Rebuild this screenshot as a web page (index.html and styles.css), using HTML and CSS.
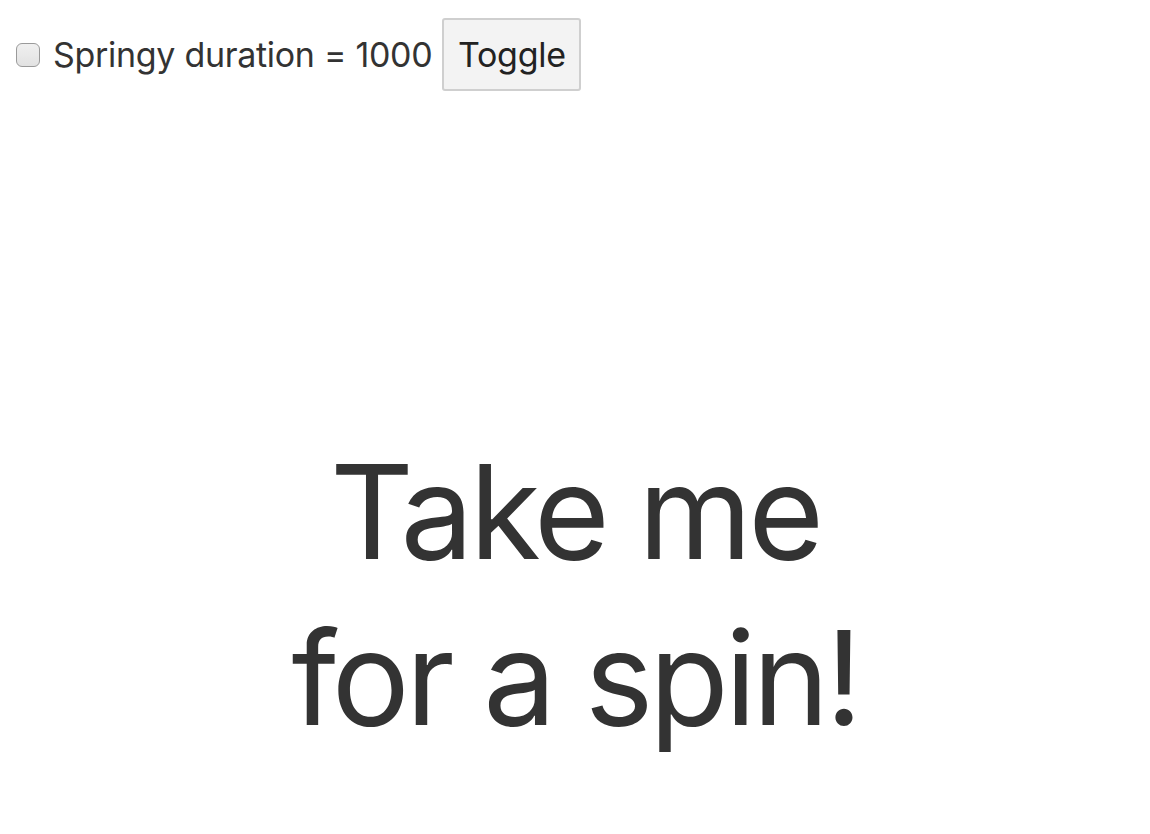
FILE: index.html
```html
<!DOCTYPE html>
<html>
<head>
<meta charset="utf-8">
<link rel="stylesheet" href="styles.css">
</head>
<body>
<div class="page">
  <div class="controls">
    <label class="springy"><input type="checkbox" class="check"><span class="label-text">Springy duration = 1000</span></label>
    <button class="toggle">Toggle</button>
  </div>
  <div class="stage">
    <div class="spin">Take me<br>for a spin!</div>
  </div>
</div>
</body>
</html>
```
FILE: styles.css
```css
html, body {
  margin: 0;
  padding: 0;
  background: #fff;
}
body {
  font-family: Inter, "Noto Sans", "Liberation Sans", sans-serif;
  color: #333;
}
.page {
  height: 834px;
  display: flex;
  flex-direction: column;
}
.controls {
  display: flex;
  align-items: center;
  padding: 18px 16px 0 16px;
  height: 73px;
}
.springy {
  display: flex;
  align-items: center;
  font-size: 34px;
  letter-spacing: -0.3px;
}
.check {
  width: 24px;
  height: 24px;
  margin: 0 13px 0 0;
  appearance: none;
  border: 1.5px solid #9a9a9a;
  border-radius: 6px;
  background: linear-gradient(#f0f0f0, #e2e2e2);
  box-sizing: border-box;
}
.toggle {
  margin-left: 10px;
  height: 73px;
  width: 139px;
  font-family: inherit;
  font-size: 34px;
  letter-spacing: -0.3px;
  color: #222;
  background: #f3f3f3;
  border: 2px solid #cfcfcf;
  border-radius: 3px;
  padding: 0;
}
.stage {
  flex: 1;
  display: flex;
  justify-content: center;
  align-items: flex-start;
  padding-top: 338px;
}
.spin {
  font-size: 130px;
  line-height: 166px;
  text-align: center;
  letter-spacing: -4px;
  color: #333;
}
```
